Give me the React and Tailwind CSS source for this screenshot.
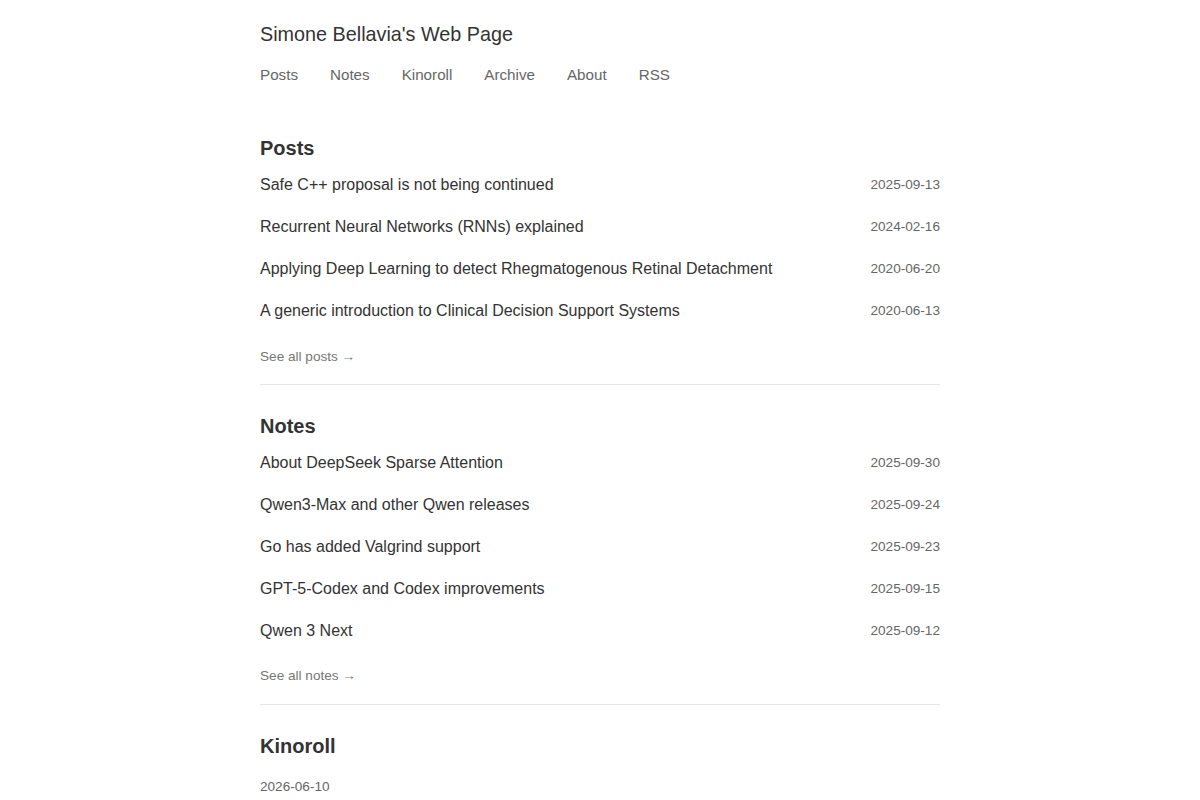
export default function App() {
  const posts = [
    ["Safe C++ proposal is not being continued", "2025-09-13"],
    ["Recurrent Neural Networks (RNNs) explained", "2024-02-16"],
    ["Applying Deep Learning to detect Rhegmatogenous Retinal Detachment", "2020-06-20"],
    ["A generic introduction to Clinical Decision Support Systems", "2020-06-13"],
  ];
  const notes = [
    ["About DeepSeek Sparse Attention", "2025-09-30"],
    ["Qwen3-Max and other Qwen releases", "2025-09-24"],
    ["Go has added Valgrind support", "2025-09-23"],
    ["GPT-5-Codex and Codex improvements", "2025-09-15"],
    ["Qwen 3 Next", "2025-09-12"],
  ];
  const nav = ["Posts", "Notes", "Kinoroll", "Archive", "About", "RSS"];

  const List = ({ items }) => (
    <ul className="mt-[2px]">
      {items.map(([t, d]) => (
        <li key={t} className="flex h-[42px] items-center justify-between">
          <a className="text-[16px] leading-[22px] text-[#333]">{t}</a>
          <span className="text-[13.6px] leading-[20px] text-[#666]">{d}</span>
        </li>
      ))}
    </ul>
  );

  return (
    <div className="min-h-screen bg-white font-['Liberation_Sans',Arial,sans-serif]">
      <div className="mx-auto w-[680px] pt-5">
        <header>
          <h1 className="text-[19.8px] leading-[28px] text-[#333]">Simone Bellavia's Web Page</h1>
          <nav className="mt-4 flex gap-8 text-[15.2px] leading-[22px] text-[#666]">
            {nav.map((n) => (
              <a key={n}>{n}</a>
            ))}
          </nav>
        </header>

        <section className="mt-12">
          <h2 className="text-[20px] font-bold leading-[28px] text-[#333]">Posts</h2>
          <List items={posts} />
          <a className="mt-[15px] block text-[13.6px] leading-[20px] text-[#777]">See all posts →</a>
        </section>
        <hr className="mt-[17px] border-0 border-t border-[#e5e5e5]" />

        <section className="mt-[27px]">
          <h2 className="text-[20px] font-bold leading-[28px] text-[#333]">Notes</h2>
          <List items={notes} />
          <a className="mt-[14px] block text-[13.6px] leading-[20px] text-[#777]">See all notes →</a>
        </section>
        <hr className="mt-[18px] border-0 border-t border-[#e5e5e5]" />

        <section className="mt-[27px]">
          <h2 className="text-[20px] font-bold leading-[28px] text-[#333]">Kinoroll</h2>
          <div className="mt-[17px] text-[13.6px] leading-[20px] text-[#666]">2026-06-10</div>
        </section>
      </div>
    </div>
  );
}
